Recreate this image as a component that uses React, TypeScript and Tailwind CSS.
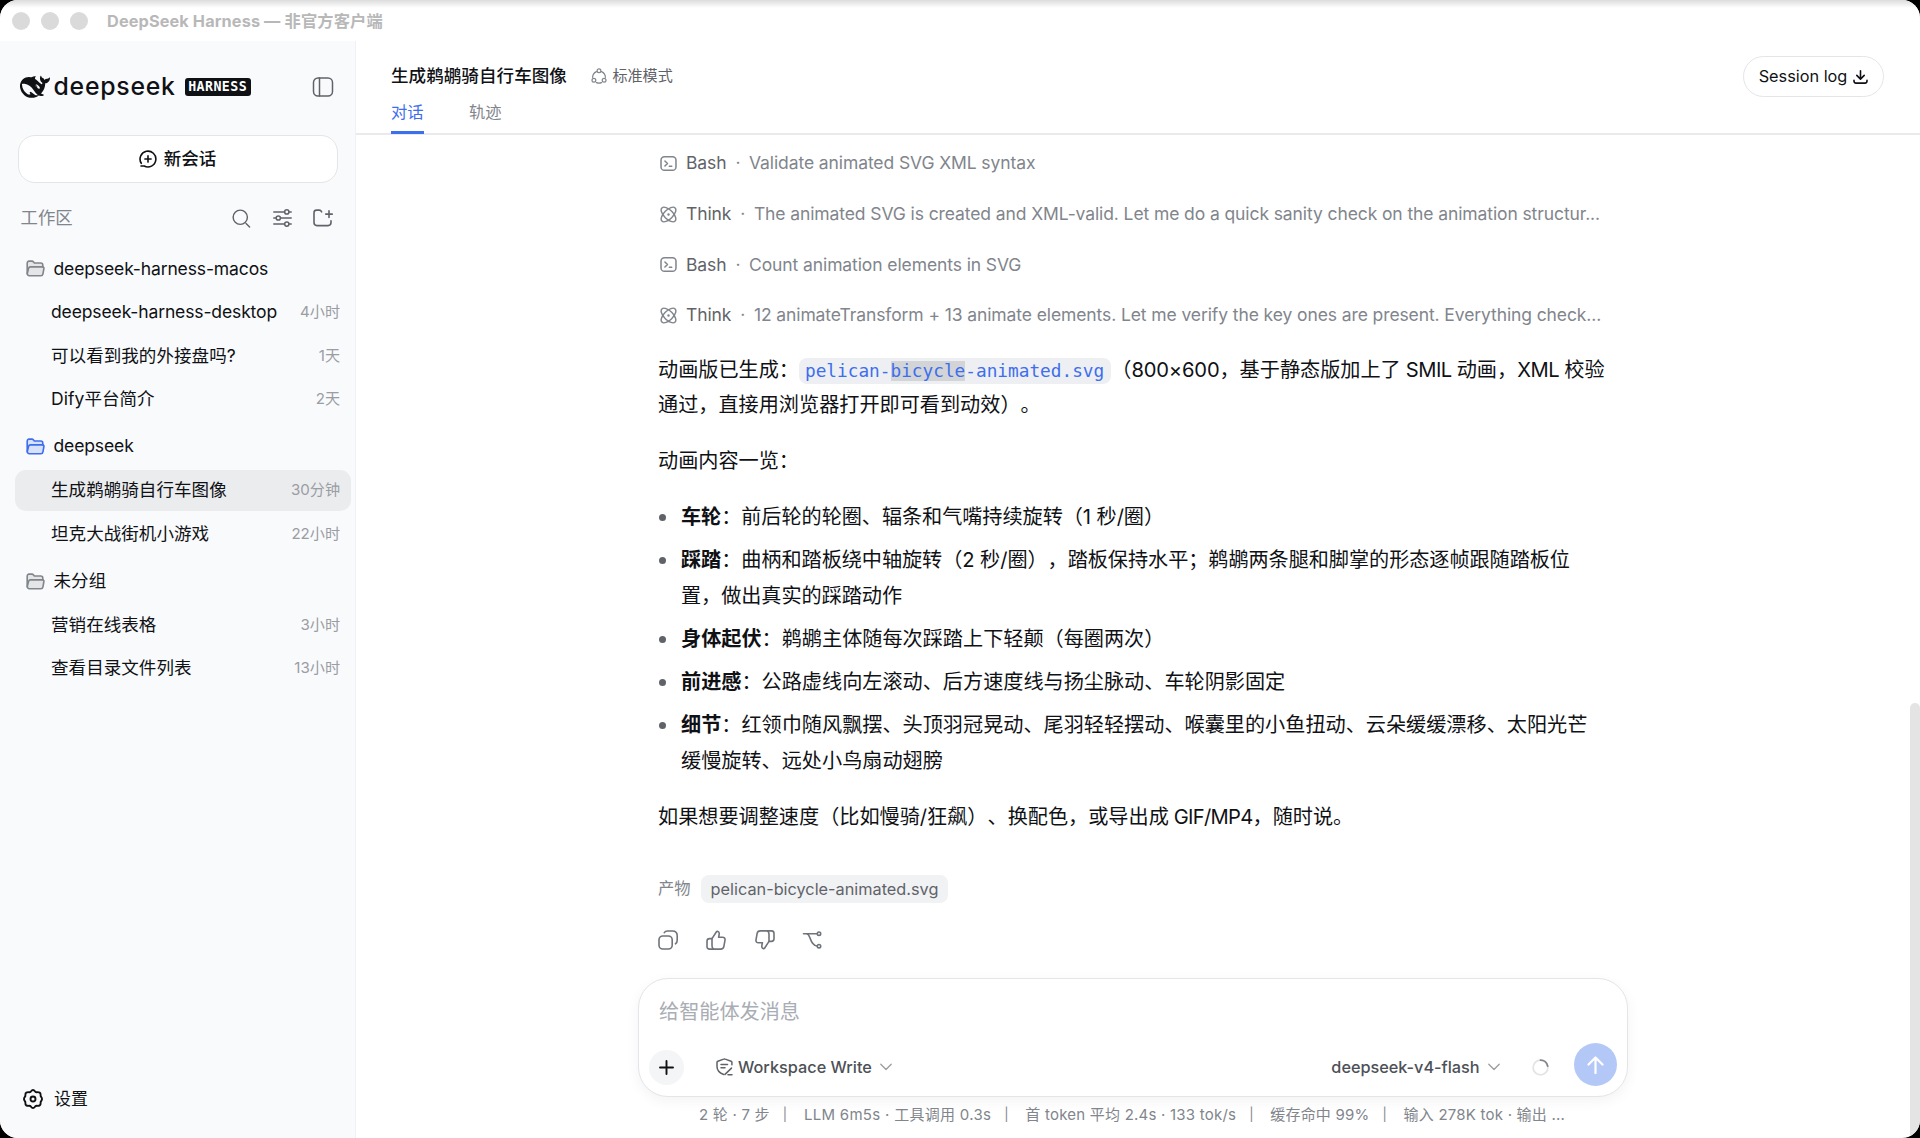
import React from 'react';

interface IconProps {
  className?: string;
}

interface Session {
  title: string;
  time: string;
  active?: boolean;
}

interface Workspace {
  name: string;
  open?: boolean;
  sessions: Session[];
}

const workspaces: Workspace[] = [
  {
    name: 'deepseek-harness-macos',
    sessions: [
      { title: 'deepseek-harness-desktop', time: '4小时' },
      { title: '可以看到我的外接盘吗?', time: '1天' },
      { title: 'Dify平台简介', time: '2天' },
    ],
  },
  {
    name: 'deepseek',
    open: true,
    sessions: [
      { title: '生成鹈鹕骑自行车图像', time: '30分钟', active: true },
      { title: '坦克大战街机小游戏', time: '22小时' },
    ],
  },
  {
    name: '未分组',
    sessions: [
      { title: '营销在线表格', time: '3小时' },
      { title: '查看目录文件列表', time: '13小时' },
    ],
  },
];

const steps = [
  { kind: 'Bash', text: 'Validate animated SVG XML syntax' },
  {
    kind: 'Think',
    text: 'The animated SVG is created and XML-valid. Let me do a quick sanity check on the animation structur...',
  },
  { kind: 'Bash', text: 'Count animation elements in SVG' },
  {
    kind: 'Think',
    text: '12 animateTransform + 13 animate elements. Let me verify the key ones are present. Everything check...',
  },
];

const bullets = [
  { label: '车轮', tight: true, lines: ['：前后轮的轮圈、辐条和气嘴持续旋转（1 秒/圈）'] },
  {
    label: '踩踏',
    tight: true,
    lines: ['：曲柄和踏板绕中轴旋转（2 秒/圈），踏板保持水平；鹈鹕两条腿和脚掌的形态逐帧跟随踏板位', '置，做出真实的踩踏动作'],
  },
  { label: '身体起伏', lines: ['：鹈鹕主体随每次踩踏上下轻颠（每圈两次）'] },
  { label: '前进感', lines: ['：公路虚线向左滚动、后方速度线与扬尘脉动、车轮阴影固定'] },
  {
    label: '细节',
    lines: ['：红领巾随风飘摆、头顶羽冠晃动、尾羽轻轻摆动、喉囊里的小鱼扭动、云朵缓缓漂移、太阳光芒', '缓慢旋转、远处小鸟扇动翅膀'],
  },
];

const stats = ['2 轮 · 7 步', 'LLM 6m5s · 工具调用 0.3s', '首 token 平均 2.4s · 133 tok/s', '缓存命中 99%', '输入 278K tok · 输出 ...'];

// Latin names run a bit tighter than CJK ones
const nameTracking = (name: string) => (/^[a-z-]+$/.test(name) ? 'tracking-[-0.140px]' : 'tracking-[0.040px]');

const Svg: React.FC<IconProps & { box?: string; width?: number; children: React.ReactNode }> = ({
  className,
  box = '0 0 20 20',
  width = 1.6,
  children,
}) => (
  <svg
    className={`shrink-0 ${className ?? ''}`}
    viewBox={box}
    fill="none"
    stroke="currentColor"
    strokeWidth={width}
    strokeLinecap="round"
    strokeLinejoin="round"
  >
    {children}
  </svg>
);

const WhaleIcon: React.FC<IconProps> = ({ className }) => (
  <svg className={className} viewBox="0 0 24 24" fill="currentColor">
    <path d="M23.748 4.482c-.254-.124-.364.113-.512.234-.051.039-.094.09-.137.136-.372.397-.806.657-1.373.626-.829-.046-1.537.214-2.163.848-.133-.782-.575-1.248-1.247-1.548-.352-.156-.708-.311-.955-.65-.172-.241-.219-.51-.305-.774-.055-.16-.11-.323-.293-.35-.2-.031-.278.136-.356.276-.313.572-.434 1.202-.422 1.84.027 1.436.633 2.58 1.838 3.393.137.093.172.187.129.323-.082.28-.18.552-.266.833-.055.179-.137.217-.329.14a5.526 5.526 0 01-1.736-1.18c-.857-.828-1.631-1.742-2.597-2.458a11.365 11.365 0 00-.689-.471c-.985-.957.13-1.743.388-1.836.27-.098.093-.432-.779-.428-.872.004-1.67.295-2.687.684a3.055 3.055 0 01-.465.137 9.597 9.597 0 00-2.883-.102c-1.885.21-3.39 1.102-4.497 2.623C.082 8.606-.231 10.684.152 12.85c.403 2.284 1.569 4.175 3.36 5.653 1.858 1.533 3.997 2.284 6.438 2.14 1.482-.085 3.133-.284 4.994-1.86.47.234.962.327 1.78.397.63.059 1.236-.03 1.705-.128.735-.156.684-.837.419-.961-2.155-1.004-1.682-.595-2.113-.926 1.096-1.296 2.746-2.642 3.392-7.003.05-.347.007-.565 0-.845-.004-.17.035-.237.23-.256a4.173 4.173 0 001.545-.475c1.396-.763 1.96-2.015 2.093-3.517.02-.23-.004-.467-.247-.588zM11.581 18c-2.089-1.642-3.102-2.183-3.52-2.16-.392.024-.321.471-.235.763.09.288.207.486.371.739.114.167.192.416-.113.603-.673.416-1.842-.14-1.897-.167-1.361-.802-2.5-1.86-3.301-3.307-.774-1.393-1.224-2.887-1.298-4.482-.02-.386.093-.522.477-.592a4.696 4.696 0 011.529-.039c2.132.312 3.946 1.265 5.468 2.774.868.86 1.525 1.887 2.202 2.891.72 1.066 1.494 2.082 2.48 2.914.348.292.625.514.891.677-.802.09-2.14.11-3.054-.614zm1-6.44a.306.306 0 01.415-.287.302.302 0 01.2.288.306.306 0 01-.31.307.303.303 0 01-.304-.308zm3.11 1.596c-.2.081-.399.151-.59.16a1.245 1.245 0 01-.798-.254c-.274-.23-.47-.358-.552-.758a1.73 1.73 0 01.016-.588c.07-.327-.008-.537-.239-.727-.187-.156-.426-.199-.688-.199a.559.559 0 01-.254-.078c-.11-.054-.2-.19-.114-.358.028-.054.16-.186.192-.21.356-.202.767-.136 1.146.016.352.144.618.408 1.001.782.391.451.462.576.685.914.176.265.336.537.445.848.067.195-.019.354-.25.452z" />
  </svg>
);

const FolderIcon: React.FC<IconProps> = ({ className }) => (
  <Svg className={className} box="0 0 20 18" width={1.7}>
    <path
      fill="currentColor"
      fillOpacity={0.18}
      d="M1.2 14V3.4C1.2 2.1 1.9 1.2 3.2 1.2h3.1c.7 0 1.2.3 1.6.8l.9 1.2h6.800c1.300 0 2.100.8 2.100 2v2.100c.9.1 1.400.8 1.200 1.700l-1 5.600c-.2 1.300-1 2-2.300 2H3.500c-1.400 0-2.300-.9-2.300-2.600z"
    />
    <path d="M1.300 14.400l1.300-5.400c.3-1.100.9-1.700 2-1.700h13.100" />
  </Svg>
);

const TerminalIcon: React.FC<IconProps> = ({ className }) => (
  <Svg className={className} width={1.8}>
    <rect x="1.200" y="2" width="17.600" height="16" rx="4" />
    <path d="M5.800 7l3 3-3 3M11 13.200h2.800" />
  </Svg>
);

const AtomIcon: React.FC<IconProps> = ({ className }) => (
  <Svg className={className} width={1.700}>
    <ellipse cx="10" cy="10" rx="11" ry="5.300" transform="rotate(45 10 10)" />
    <ellipse cx="10" cy="10" rx="11" ry="5.300" transform="rotate(-45 10 10)" />
    <circle cx="10" cy="10" r="1.400" fill="currentColor" stroke="none" />
  </Svg>
);

const ChevronIcon: React.FC<IconProps> = ({ className }) => (
  <Svg className={className} box="0 0 12 8" width={1.3}>
    <path d="M.8 1.200L6 6.500l5.200-5.300" />
  </Svg>
);

const Sidebar: React.FC = () => (
  <aside className="flex w-[356px] shrink-0 flex-col border-r border-[#eff1f4] bg-[#f9fafc]">
    {/* Logo */}
    <div className="flex h-[91px] items-center pl-[20px] pr-[21.500px]">
      <WhaleIcon className="h-[30px] w-[30px] shrink-0" />
      <span className="ml-[3.500px] text-[24.800px] font-medium leading-none tracking-[0.750px]">deepseek</span>
      <span className="ml-[9px] flex h-[18px] w-[66px] items-center justify-center rounded-[3px] bg-[#0f1115] font-['DejaVu_Sans_Mono'] text-[13.300px] font-bold leading-none tracking-[0.400px] text-white">
        HARNESS
      </span>
      <Svg className="ml-auto h-[20px] w-[22px] text-[#5f6369]" box="0 0 22 20" width={1.5}>
        <rect x="1.500" y="1" width="19" height="18" rx="4.500" />
        <path d="M7.500 1v18" />
      </Svg>
    </div>

    <button className="ml-[18px] mt-[3px] flex h-12 w-80 items-center justify-center gap-[7px] rounded-[17px] border border-[#e3e5e8] bg-white pr-px text-[17.550px] font-medium">
      <Svg className="h-[18px] w-[18px]" box="0 0 18 18" width={1.6}>
        <path d="M2.300 13.300A7.900 7.900 0 1 1 5.200 16H2" />
        <path d="M9 5.900v6.200M5.900 9h6.200" />
      </Svg>
      新会话
    </button>

    {/* Workspace toolbar */}
    <div className="mt-[16px] flex h-[38px] items-center pl-[20.500px] pr-[22.500px] text-[#5f6369]">
      <span className="mr-auto text-[17.400px] text-[#81858c]">工作区</span>
      <Svg className="h-[19px] w-[19px]" width={1.5}>
        <circle cx="8.700" cy="8.700" r="7.500" />
        <path d="M14.800 15.300l3.700 3.700" />
      </Svg>
      <Svg className="ml-[22px] h-[18px] w-[19px]" box="0 0 19 18" width={1.5}>
        <path d="M.8 2.900h10.400M16.400 2.900h1.800M.8 9h2M7.800 9h10.400M.8 15.100h10.400M16.400 15.100h1.800" />
        <circle cx="13.800" cy="2.900" r="2.100" />
        <circle cx="5.300" cy="9" r="2.100" />
        <circle cx="13.800" cy="15.100" r="2.100" />
      </Svg>
      <Svg className="ml-[21px] h-[18px] w-[20px]" box="0 0 20 18" width={1.6}>
        <path d="M8.600 2.800L7.800 1.800C7.400 1.300 7 1.100 6.300 1.100H3.600C2 1.100 1 2.100 1 3.700v9.900c0 1.900 1.100 3 3 3h11c1.900 0 3-1.100 3-3v-1.800" />
        <path d="M16 1.800v6.600M12.700 5.100h6.600" />
      </Svg>
    </div>

    {workspaces.map((ws, i) => (
      <div key={ws.name} className={i === 0 ? 'mt-[9.500px]' : 'mt-[3.500px]'}>
        <div className="flex h-[44.500px] items-center gap-[8.500px] pl-[26px] text-[17.550px]">
          <FolderIcon className={`h-[17px] w-[19px] ${ws.open ? 'text-[#3d6eee]' : 'text-[#81858c]'}`} />
          <span className={nameTracking(ws.name)}>{ws.name}</span>
        </div>
        {ws.sessions.map((s) => (
          <div key={s.title} className="flex h-[43.300px] items-center">
            <div
              className={`ml-[15px] flex h-[41px] w-[336px] items-center justify-between rounded-[11px] pl-9 pr-[11px] text-[17.550px] ${
                s.active ? 'bg-[#ebecee]' : ''
              }`}
            >
              <span className={nameTracking(s.title)}>{s.title}</span>
              <span className="text-[15.100px] text-[#9a9da3]">{s.time}</span>
            </div>
          </div>
        ))}
      </div>
    ))}

    <div className="mb-[19px] mt-auto flex h-10 items-center gap-[11px] pl-[23px] text-[16.900px]">
      <Svg className="h-5 w-5" width={1.9}>
        <path d="M10 1c1 0 1.400.5 2 1.300.6.700 1.100 1 2 .9 1-.1 1.900-.1 2.700.4.8.5 1 1.300.9 2.400-.1.900.100 1.500.7 2.200.5.600.7 1.100.7 1.800s-.2 1.200-.7 1.800c-.6.700-.8 1.300-.7 2.200.1 1.100-.1 1.900-.9 2.400-.8.500-1.700.5-2.700.4-.9-.1-1.400.200-2 .9-.6.800-1 1.300-2 1.300s-1.400-.5-2-1.300c-.6-.7-1.100-1-2-.9-1 .1-1.900.1-2.700-.4-.8-.5-1-1.300-.9-2.400.1-.9-.1-1.500-.7-2.200C1.200 11.200 1 10.700 1 10s.2-1.200.7-1.800c.6-.7.8-1.300.7-2.200-.1-1.100.1-1.900.9-2.400.8-.5 1.700-.5 2.700-.4.9.1 1.400-.2 2-.9C8.600 1.500 9 1 10 1z" />
        <circle cx="10" cy="10" r="2.500" />
      </Svg>
      <span className="pt-px">设置</span>
    </div>
  </aside>
);

const Header: React.FC = () => (
  <header className="flex h-[94px] shrink-0 justify-between border-b-2 border-[#e9eaec] pl-[35px] pr-9">
    <div className="flex flex-col">
      <div className="mt-[20px] flex h-8 items-center">
        <h1 className="text-[17.550px] font-medium tracking-[0.060px]">生成鹈鹕骑自行车图像</h1>
        <Svg className="ml-[24.500px] h-4 w-4 text-[#81858c]" box="0 0 16 16" width={1.2}>
          <circle cx="8" cy="2.700" r="1.900" />
          <circle cx="2.900" cy="12.300" r="1.900" />
          <circle cx="13.100" cy="12.300" r="1.900" />
          <path d="M5.400 3.600A6.600 6.600 0 0 0 1.600 9.300M10.600 3.600a6.600 6.600 0 0 1 3.800 5.700M5.500 14.600a6.600 6.600 0 0 0 5 0" />
        </Svg>
        <span className="ml-[5px] text-[15.100px] text-[#5f6369]">标准模式</span>
      </div>
      <nav className="mt-[5px] flex h-[37px] gap-[45.500px] text-[16.300px]">
        <span className="h-[38px] border-b-[3px] border-[#3d6eee] pt-[4px] leading-[24px] text-[#3d6eee]">对话</span>
        <span className="pt-[4px] leading-[24px] text-[#81858c]">轨迹</span>
      </nav>
    </div>
    <button className="mt-[15px] flex h-[41px] w-[141px] items-center justify-center gap-[6px] rounded-full border border-[#e3e5e8] text-[16.300px]">
      Session log
      <Svg className="h-[14px] w-[15px]" box="0 0 15 14" width={1.6}>
        <path d="M7.500.8v8M3.800 5.400l3.700 3.700 3.700-3.700M1 10.300v.8c0 1.200.8 2 2 2h9c1.200 0 2-.8 2-2v-.8" />
      </Svg>
    </button>
  </header>
);

const Composer: React.FC = () => (
  <div className="-ml-[20px] flex h-[119px] w-[990px] flex-col rounded-[30px] border border-[#e3e5e8] bg-white shadow-[0_4px_14px_rgba(0,0,0,0.05)]">
    <div className="pl-[20px] pt-[19px] text-[20.150px] leading-[28px] text-[#a9adb4]">给智能体发消息</div>
    <div className="mt-[17px] flex h-[48px] items-center pl-[10px] pr-[10px] text-[16.300px] font-medium text-[#4d5157]">
      <span className="flex h-[35px] w-[35px] items-center justify-center rounded-full bg-[#f3f5f7] text-[#0f1115]">
        <Svg className="h-[15px] w-[15px]" box="0 0 15 15" width={1.9}>
          <path d="M7.500 1v13M1 7.500h13" />
        </Svg>
      </span>
      <Svg className="ml-[32px] h-[18px] w-[17px] text-[#5f6369]" box="0 0 17 18" width={1.5}>
        <path d="M7.700 16.500C3.700 15 1 12.500 1 8.500V4.300c0-.6.3-.9.800-1.100L7.700 1.100c.5-.2 1-.2 1.500 0l5.900 2.100c.5.200.8.500.8 1.100v2.500" />
        <path d="M5 6.500h6.500M5 9.700h4M9 16.400l6.500-6.300M12 16.800h4" />
      </Svg>
      <span className="ml-[5px]">Workspace Write</span>
      <ChevronIcon className="ml-[8px] h-[8px] w-3 text-[#9a9da3]" />
      <span className="ml-auto tracking-[-0.030px]">deepseek-v4-flash</span>
      <ChevronIcon className="ml-[8.500px] h-[8px] w-3 text-[#9a9da3]" />
      <svg className="ml-[32px] h-[17px] w-[17px]" viewBox="0 0 17 17" fill="none" strokeWidth="1.800">
        <circle cx="8.500" cy="8.500" r="7.400" stroke="#e2e4e6" />
        <path d="M8.500 1.100a7.400 7.400 0 0 1 7.200 6" stroke="#81858c" strokeLinecap="round" />
      </svg>
      <span className="-mt-[5px] ml-[25px] flex h-[43px] w-[43px] items-center justify-center rounded-full bg-[#b4c8f8] text-white">
        <Svg className="h-[18px] w-[17px]" box="0 0 17 18" width={2.2}>
          <path d="M8.500 17V1.500M1.500 8.500l7-7 7 7" />
        </Svg>
      </span>
    </div>
  </div>
);

const App: React.FC = () => (
  <div className="h-[1138px] w-[1920px] overflow-hidden bg-black font-[Inter,'Noto_Sans_CJK_SC',sans-serif] text-[#0f1115] [text-spacing-trim:space-all]">
    <div className="relative flex h-full flex-col overflow-hidden whitespace-nowrap rounded-[18px] bg-white">
      {/* Title bar */}
      <div className="flex h-[41px] shrink-0 items-center bg-gradient-to-b from-[#dcdcdc] to-white to-[8px] pl-[11.500px]">
        <span className="h-[18px] w-[18px] rounded-full bg-[#dadada]" />
        <span className="ml-[11px] h-[18px] w-[18px] rounded-full bg-[#dadada]" />
        <span className="ml-[11px] h-[18px] w-[18px] rounded-full bg-[#dadada]" />
        <span className="ml-[19.500px] pt-px text-[16.300px] font-bold tracking-[0.120px] text-[#b8b8b8]">
          DeepSeek Harness — 非官方客户端
        </span>
      </div>

      <div className="flex min-h-0 flex-1">
        <Sidebar />
        <main className="flex min-w-0 flex-1 flex-col">
          <Header />

          <div className="ml-[302px] flex w-[960px] flex-col">
            {/* Tool steps */}
            <div className="mt-[3px]">
              {steps.map((s) => (
                <div key={s.text} className="flex h-[50.700px] items-center text-[17.500px] text-[#81858c]">
                  {s.kind === 'Bash' ? (
                    <TerminalIcon className="ml-[1.500px] h-[17px] w-[17px]" />
                  ) : (
                    <AtomIcon className="ml-[1.500px] h-[17px] w-[17px]" />
                  )}
                  <span className="ml-[9.500px] tracking-[-0.100px] text-[#5f6369]">{s.kind}</span>
                  <span className="ml-[9px]">·</span>
                  <span className="ml-[8.500px] tracking-[-0.100px]">{s.text}</span>
                </div>
              ))}
            </div>

            {/* Answer */}
            <div className="mt-[10.800px] text-[20.150px] leading-[35.400px]">
              <p>
                动画版已生成：
                <code className="rounded-[8px] bg-[#eeeff2] py-[3px] pl-[6px] pr-[7px] font-['DejaVu_Sans_Mono'] text-[17.750px] leading-none text-[#3d6eee]">
                  pelican-<span className="bg-[#d3d4d6]">bicycle</span>-animated.svg
                </code>
                （<span className="tracking-[-0.150px]">800×600</span>，基于静态版加上了
                <span className="tracking-[-0.550px]"> SMIL </span>动画，
                <span className="tracking-[-0.450px]">XML </span>校验
                <br />
                通过，直接用浏览器打开即可看到动效）。
              </p>
              <p className="mt-[21px]">动画内容一览：</p>
              <ul className="mt-[20.500px] flex flex-col gap-[7.800px]">
                {bullets.map((b) => (
                  <li key={b.label} className={`flex ${b.tight ? 'tracking-[-0.050px]' : ''}`}>
                    <span className="ml-[1px] mt-[15px] h-[7px] w-[7px] shrink-0 rounded-full bg-[#5f6369]" />
                    <div className="ml-[15px]">
                      <strong className="font-semibold">{b.label}</strong>
                      {b.lines[0]}
                      {b.lines[1] && <div>{b.lines[1]}</div>}
                    </div>
                  </li>
                ))}
              </ul>
              <p className="mt-[20.500px]">
                如果想要调整速度（比如慢骑/狂飙）、换配色，或导出成
                <span className="tracking-[-0.700px]"> GIF/MP4</span>，随时说。
              </p>
            </div>

            <div className="mt-[40.500px] flex h-7 items-center text-[16.300px] text-[#81858c]">
              产物
              <span className="ml-[10px] flex h-7 items-center rounded-[8px] bg-[#f1f2f4] px-[10px] pt-px text-[16.300px] text-[#5f6369]">
                pelican-bicycle-animated.svg
              </span>
            </div>

            {/* Message actions */}
            <div className="mt-[27.500px] flex h-5 items-center gap-[28.300px] text-[#6f737a]">
              <Svg className="h-5 w-5" width={1.6}>
                <rect x="1" y="6" width="13.200" height="13" rx="3.800" />
                <path d="M6.300 2.700C6.900 1.600 8 1 9.500 1h5c3 0 4.700 1.700 4.700 4.700v4.500c0 1.700-.5 2.900-1.700 3.600" />
              </Svg>
              <Svg className="h-5 w-5" width={1.6}>
                <path d="M6 8.600L10.300 2c.7-1.100 2.800-.6 2.900 1.200.1 1.200-.3 2.700-.6 4h3.900c1.800 0 2.800 1.200 2.500 2.900l-1.100 6.200c-.3 1.800-1.400 2.800-3.200 2.800H3.600C2 19.100 1 18.100 1 16.500v-5.300c0-1.600 1-2.600 2.600-2.600H6z" />
                <path d="M6 8.600v7.200c0 1.400.5 2.600 1.400 3.200" />
              </Svg>
              <Svg className="h-5 w-5" width={1.6}>
                <path d="M14 11.400L9.700 18c-.7 1.100-2.800.6-2.900-1.200-.1-1.200.3-2.700.6-4H3.500c-1.800 0-2.800-1.200-2.500-2.900l1.100-6.200C2.400 1.900 3.500.9 5.300.9h11.100C18 .9 19 1.900 19 3.500v5.300c0 1.600-1 2.600-2.600 2.600H14z" />
                <path d="M14 11.400V4.200c0-1.400-.5-2.600-1.400-3.200" />
              </Svg>
              <Svg className="-ml-px h-5 w-5" width={1.600}>
                <path d="M1.500 3.700h13.500M4.300 3.700c2 0 2.700 1.500 3.500 3.700 1.500 4.200 3 8.200 7.300 8.600" />
                <circle cx="17" cy="3.700" r="1.700" />
                <circle cx="17" cy="16.200" r="1.700" />
              </Svg>
            </div>

            <div className="mt-[28px]">
              <Composer />
            </div>

            <div className="mt-[6px] flex h-6 items-center pl-[41px] text-[15px] tracking-[0.220px] text-[#81858c]">
              {stats.map((s, i) => (
                <React.Fragment key={s}>
                  {i > 0 && <span className="ml-[13px] mr-[16.500px] text-[13px]">|</span>}
                  <span className={i === 1 ? 'tracking-[0.300px]' : ''}>{s}</span>
                </React.Fragment>
              ))}
            </div>
          </div>
        </main>
      </div>

      {/* Scrollbar thumb */}
      <div className="absolute bottom-0 right-0 h-[435px] w-[10px] rounded-t-full bg-[#e4e4e4]" />
    </div>
  </div>
);

export default App;
